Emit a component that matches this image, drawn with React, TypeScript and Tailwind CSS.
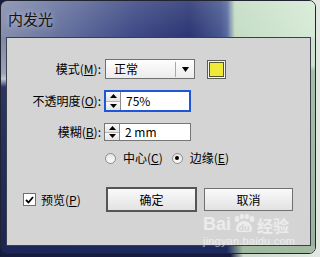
import React from 'react';

const Tri = ({ down }: { down?: boolean }) => (
  <svg width="7" height="4" viewBox="0 0 7 4" className="block">
    <polygon points={down ? '0,0 7,0 3.5,4' : '0,4 7,4 3.5,0'} fill="#000" />
  </svg>
);

const Spinner = ({ value, focused }: { value: string; focused?: boolean }) => (
  <div className={`flex bg-white ${focused ? 'w-[87px] h-[22px] border-2 border-[#1f56d8]' : 'w-[87px] h-[18px] border border-[#767676]'}`}>
    <div className="w-[15px] flex flex-col border-r border-[#8a8a8a] bg-[#e6e6e6]">
      <div className="flex-1 flex items-center justify-center border-b border-[#b4b4b4] bg-[linear-gradient(180deg,#fafafa,#e4e4e4)]">
        <Tri />
      </div>
      <div className="flex-1 flex items-center justify-center bg-[linear-gradient(180deg,#fafafa,#e4e4e4)]">
        <Tri down />
      </div>
    </div>
    <div className="flex-1 flex items-center pl-[5px] text-[12px] leading-none text-black">{value}</div>
  </div>
);

const Label = ({ pre, k }: { pre: string; k: string }) => (
  <div className="w-[94px] text-right text-[12px] leading-none text-black whitespace-nowrap">
    {pre}(<u>{k}</u>):
  </div>
);

const Radio = ({ checked }: { checked?: boolean }) => (
  <div className="w-[11px] h-[11px] rounded-full border border-[#8c8c8c] bg-[linear-gradient(180deg,#e4e4e4,#fbfbfb)] flex items-center justify-center">
    {checked && <div className="w-[4px] h-[4px] rounded-full bg-black" />}
  </div>
);

export default function App() {
  return (
    <div className="w-[320px] h-[257px] overflow-hidden relative bg-[linear-gradient(90deg,#161c40_0%,#161c40_72%,#cbd8cb_76%,#e3e8e3_100%)] font-['Noto_Sans_CJK_SC',sans-serif]">
      <div className="w-[316px] h-[254px] rounded-[7px] border border-[#20242e] overflow-hidden flex flex-col">
        {/* title bar */}
        <div className="h-[36px] shrink-0 flex items-center pl-[7px] bg-[linear-gradient(180deg,rgba(255,255,255,0.12),rgba(255,255,255,0)),linear-gradient(90deg,#868ead_0%,#6c78a2_15%,#3e4a86_42%,#2b3573_60%,#46568f_70%,#5869a2_72%,#c4dcc4_74.5%,#d6ead6_100%)]">
          <span className="text-[15px] leading-none text-[#141414] [text-shadow:0_0_6px_rgba(255,255,255,0.6)] -mt-[2px]">内发光</span>
        </div>
        <div className="flex flex-1">
          <div className="w-[5px] bg-[linear-gradient(180deg,#8088a8_0px,#9aa2bc_36px,#c0c6d2_42px,#2a3568_50px,#1b2558_100%)]" />
          {/* panel */}
          <div className="w-[305px] h-[209px] border border-[#3a3f4a] bg-[#d4d4d4] flex flex-col relative">
            <div className="mt-[21px] flex items-center h-[20px]">
              <Label pre="模式" k="M" />
              <div className="ml-[4px] w-[90px] h-[20px] border border-[#707070] bg-[linear-gradient(180deg,#fdfdfd,#ececec)] flex items-center">
                <span className="pl-[8px] text-[12px] leading-none text-black flex-1">正常</span>
                <div className="w-px h-[15px] bg-[#a8a8a8]" />
                <div className="w-[18px] flex justify-center">
                  <svg width="7" height="5" viewBox="0 0 7 5"><polygon points="0,0 7,0 3.5,5" fill="#000" /></svg>
                </div>
              </div>
              <div className="ml-[12px] w-[19px] h-[19px] border border-[#5c5c5c] bg-[#f4f4f4] p-[1px]">
                <div className="w-full h-full border border-[#55552a] bg-[#efe93a]" />
              </div>
            </div>
            <div className="mt-[11px] flex items-center h-[22px]">
              <Label pre="不透明度" k="O" />
              <div className="ml-[3px]"><Spinner value="75%" focused /></div>
            </div>
            <div className="mt-[11px] flex items-center h-[18px]">
              <Label pre="模糊" k="B" />
              <div className="ml-[3px]"><Spinner value="2 mm" /></div>
            </div>
            <div className="mt-[11px] flex items-center h-[12px] pl-[98px] text-[12px] leading-none text-black">
              <Radio />
              <span className="ml-[7px]">中心(<u>C</u>)</span>
              <div className="ml-[9px]"><Radio checked /></div>
              <span className="ml-[7px]">边缘(<u>E</u>)</span>
            </div>
            <div className="mt-[23px] flex items-center h-[25px]">
              <div className="w-[99px] pl-[16px] flex items-center">
                <div className="w-[13px] h-[13px] border border-[#707070] bg-white flex items-center justify-center">
                  <svg width="9" height="8" viewBox="0 0 9 8"><polyline points="1,4 3.5,6.5 8,1" fill="none" stroke="#000" strokeWidth="1.8" /></svg>
                </div>
                <span className="ml-[5px] text-[12px] leading-none text-black">预览(<u>P</u>)</span>
              </div>
              <button className="w-[91px] h-[25px] border-2 border-[#555] bg-[linear-gradient(180deg,#fafafa,#e2e2e2)] text-[12px] leading-none text-black">确定</button>
              <button className="ml-[7px] w-[89px] h-[23px] border border-[#707070] bg-[linear-gradient(180deg,#fafafa,#e2e2e2)] text-[12px] leading-none text-black">取消</button>
            </div>
          </div>
          <div className="w-[4px] bg-[linear-gradient(180deg,#cfe2cf_0px,#cfe2cf_28px,#a9bea9_34px,#9bb39b_100%)]" />
        </div>
        <div className="h-[7px] shrink-0 bg-[linear-gradient(90deg,#1c2658_0%,#1e2a5e_72%,#9fb89f_77%,#a3bba3_100%)]" />
      </div>
      {/* watermark */}
      <div className="absolute left-[203px] top-[214px] text-white/55 pointer-events-none">
        <div className="flex items-end h-[19px]">
          <span className="font-['Liberation_Sans',sans-serif] font-bold text-[18px] leading-none">Bai</span>
          <svg width="24" height="19" viewBox="0 0 24 19" className="mx-[1px]">
            <g fill="rgba(255,255,255,0.55)">
              <ellipse cx="5" cy="5" rx="2.3" ry="3" />
              <ellipse cx="10" cy="2.6" rx="2.3" ry="2.6" />
              <ellipse cx="15" cy="2.6" rx="2.3" ry="2.6" />
              <ellipse cx="20" cy="5" rx="2.3" ry="3" />
              <path d="M12 7 C7 7 3 12 4 16 C5 19 9 18 12 18 C15 18 19 19 20 16 C21 12 17 7 12 7Z" />
            </g>
            <text x="12" y="16.5" textAnchor="middle" fontSize="9" fontWeight="bold" fontFamily="Liberation Sans" fill="#d4d4d4">du</text>
          </svg>
          <span className="text-[16px] leading-none font-bold">经验</span>
        </div>
        <div className="mt-[3px] text-[11px] leading-none font-['Liberation_Sans',sans-serif] tracking-[0.2px]">jingyan.baidu.com</div>
      </div>
    </div>
  );
}
